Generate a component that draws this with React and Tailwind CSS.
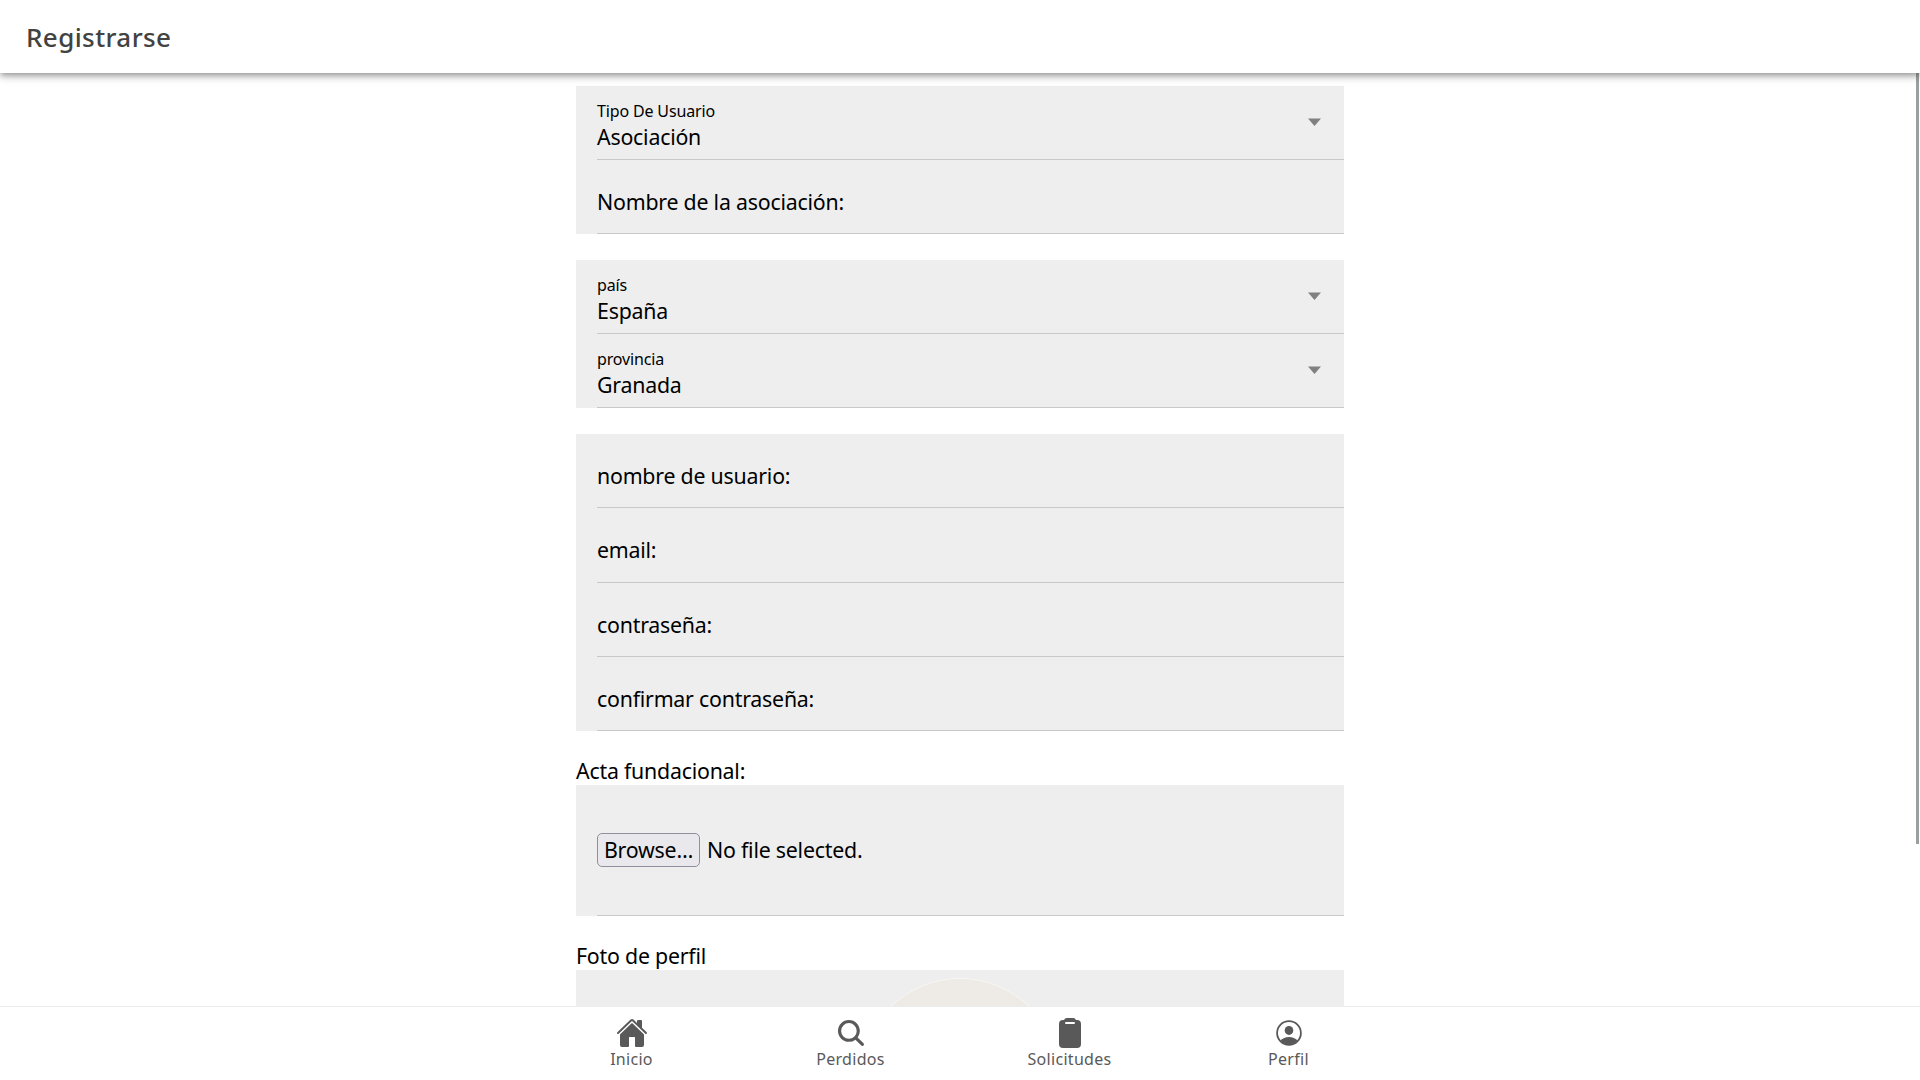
import React from "react";
import { IoHome, IoSearch, IoClipboard } from "react-icons/io5";

function PersonIcon({ size }) {
  return (
    <svg width={size} height={size} viewBox="0 0 32 32" fill="currentColor">
      <circle cx="16" cy="16" r="11.9" fill="none" stroke="currentColor" strokeWidth="1.8" />
      <ellipse cx="16" cy="13.400" rx="4.300" ry="4.500" />
      <path d="M7.600 23.300C9.400 21.300 12.600 20 16 20s6.600 1.300 8.400 3.300A11.800 11.800 0 0 1 16 28a11.800 11.800 0 0 1-8.400-4.700z" />
    </svg>
  );
}

function SelectRow({ label, value, height }) {
  return (
    <div className={`${height} pl-[21px]`}>
      <div className="flex h-full items-center border-b border-[#c8c8c8] pr-[23px]">
        <div className="flex-1 pt-[7px]">
          <div className="text-[16px] leading-[22px] tracking-[-0.15px]">{label}</div>
          <div className="text-[21.33px] leading-[30px] tracking-[-0.22px]">{value}</div>
        </div>
        <svg width="13" height="8" viewBox="0 0 13 8" className="mb-px block">
          <path d="M0 .5h13L6.500 8z" fill="#808080" />
        </svg>
      </div>
    </div>
  );
}

function InputRow({ label, height, padding = "pt-[11px]" }) {
  return (
    <div className={`${height} pl-[21px]`}>
      <div className={`${padding} flex h-full items-center border-b border-[#c8c8c8] text-[21.33px] leading-[30px] tracking-[-0.22px]`}>
        {label}
      </div>
    </div>
  );
}

function Tab({ icon: Icon, label }) {
  return (
    <div className="flex w-[219px] flex-col items-center pt-[10px] text-[#595959]">
      <Icon size={32} />
      <span className="text-[16px] leading-[20px] tracking-[0.3px]">{label}</span>
    </div>
  );
}

export default function App() {
  return (
    <div className="flex h-[1080px] w-[1920px] flex-col overflow-hidden bg-white font-['Noto_Sans',sans-serif] text-black">
      <header className="relative z-10 flex h-[73px] shrink-0 items-center bg-white pl-[26px] shadow-[0_2.67px_5.33px_-1.33px_rgba(0,0,0,0.26),0_5.33px_6.67px_rgba(0,0,0,0.18),0_1.33px_13.33px_rgba(0,0,0,0.12)]">
        <h1 className="text-[26px] font-medium leading-[36px] tracking-[0.4px] text-[#424242]">Registrarse</h1>
      </header>
      <main className="flex min-h-0 flex-1 overflow-hidden">
        <div className="w-[576px] shrink-0" />
        <form className="w-[768px] shrink-0 pt-[13px]">
          <div className="bg-[#eeeeee]">
            <SelectRow label="Tipo De Usuario" value="Asociación" height="h-[74px]" />
            <InputRow label="Nombre de la asociación:" height="h-[74px]" />
          </div>
          <div className="mt-[26px] bg-[#eeeeee]">
            <SelectRow label="país" value="España" height="h-[74px]" />
            <SelectRow label="provincia" value="Granada" height="h-[74px]" />
          </div>
          <div className="mt-[26px] bg-[#eeeeee]">
            <InputRow label="nombre de usuario:" height="h-[74px]" />
            <InputRow label="email:" height="h-[75px]" padding="pt-[9px]" />
            <InputRow label="contraseña:" height="h-[74px]" />
            <InputRow label="confirmar contraseña:" height="h-[74px]" />
          </div>
          <div className="mt-[26px] h-[28px] text-[21.33px] leading-[27px] tracking-[-0.22px]">Acta fundacional:</div>
          <div className="h-[131px] bg-[#eeeeee] pl-[21px]">
            <div className="flex h-full items-center border-b border-[#c8c8c8] text-[21.33px] tracking-[-0.22px]">
              <button type="button" className="h-[34px] w-[103px] rounded-[5px] border border-[#8f8f9d] bg-[#e9e9ed] leading-[30px] tracking-[-0.22px]">
                Browse…
              </button>
              <span className="ml-[7px]">No file selected.</span>
            </div>
          </div>
          <div className="mt-[26px] h-[28px] text-[21.33px] leading-[27px] tracking-[-0.22px]">Foto de perfil</div>
          <div className="flex h-[240px] justify-center bg-[#eeeeee] pt-2">
            <div className="size-[200px] rounded-full border border-[#f9f7f4] bg-[#eeeae5]" />
          </div>
        </form>
        <div className="flex flex-1 justify-end">
          <div className="mr-px h-[771px] w-[3px] bg-[#9b9f9f]" />
        </div>
      </main>
      <nav className="flex h-[74px] shrink-0 justify-center border-t border-[#ededed] bg-white">
        <Tab icon={IoHome} label="Inicio" />
        <Tab icon={IoSearch} label="Perdidos" />
        <Tab icon={IoClipboard} label="Solicitudes" />
        <Tab icon={PersonIcon} label="Perfil" />
      </nav>
    </div>
  );
}
